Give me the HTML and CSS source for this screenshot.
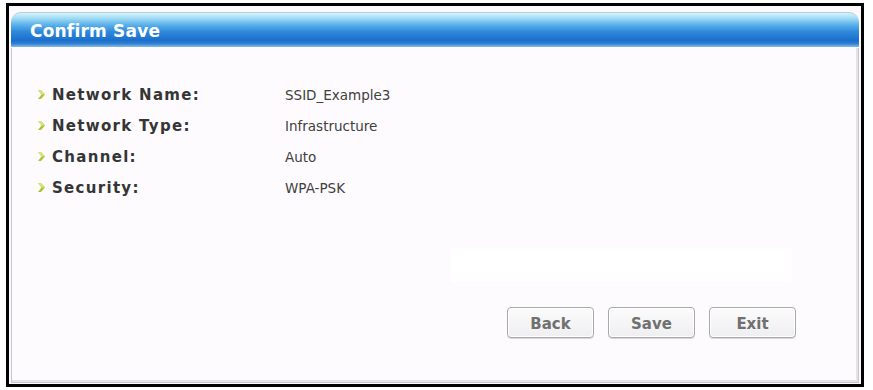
FILE: index.html
```html
<!DOCTYPE html>
<html>
<head>
<meta charset="utf-8">
<link rel="stylesheet" href="styles.css">
</head>
<body>
<div class="frame">
  <div class="panel">
    <div class="header"><span class="title">Confirm Save</span></div>
    <div class="content">
      <div class="rows">
        <div class="row">
          <span class="label"><svg class="arrow" viewBox="0 0 9 11" width="9" height="11"><path d="M1 1 L4 1 L8 5.5 L4 10 L1 10 L4.5 5.5 Z" fill="#a6c736"/><path d="M1 1 L4 1 L8 5.5 L4.5 5.5 Z" fill="#d3e67a"/></svg>Network Name:</span>
          <span class="value">SSID_Example3</span>
        </div>
        <div class="row">
          <span class="label"><svg class="arrow" viewBox="0 0 9 11" width="9" height="11"><path d="M1 1 L4 1 L8 5.5 L4 10 L1 10 L4.5 5.5 Z" fill="#a6c736"/><path d="M1 1 L4 1 L8 5.5 L4.5 5.5 Z" fill="#d3e67a"/></svg>Network Type:</span>
          <span class="value">Infrastructure</span>
        </div>
        <div class="row">
          <span class="label"><svg class="arrow" viewBox="0 0 9 11" width="9" height="11"><path d="M1 1 L4 1 L8 5.5 L4 10 L1 10 L4.5 5.5 Z" fill="#a6c736"/><path d="M1 1 L4 1 L8 5.5 L4.5 5.5 Z" fill="#d3e67a"/></svg>Channel:</span>
          <span class="value">Auto</span>
        </div>
        <div class="row">
          <span class="label"><svg class="arrow" viewBox="0 0 9 11" width="9" height="11"><path d="M1 1 L4 1 L8 5.5 L4 10 L1 10 L4.5 5.5 Z" fill="#a6c736"/><path d="M1 1 L4 1 L8 5.5 L4.5 5.5 Z" fill="#d3e67a"/></svg>Security:</span>
          <span class="value">WPA-PSK</span>
        </div>
      </div>
      <div class="whitebox"></div>
      <div class="buttons">
        <button class="btn">Back</button>
        <button class="btn">Save</button>
        <button class="btn">Exit</button>
      </div>
    </div>
  </div>
</div>
</body>
</html>
```

FILE: styles.css
```css
html, body {
  margin: 0;
  padding: 0;
  background: #ffffff;
}
body {
  padding: 3px 0 0 6px;
  font-family: "DejaVu Sans", sans-serif;
}
.frame {
  width: 852px;
  height: 378px;
  border: 3px solid #000;
  background: #fbf9fb;
  display: flex;
  flex-direction: column;
}
.panel {
  margin: 7px 2px 1px 2px;
  flex: 1;
  border: 1px solid #c9c7cb;
  border-top: none;
  border-radius: 10px 10px 0 0;
  box-shadow: inset -2px -2px 0 #e4e2e6;
  background: #fdfbfd;
  display: flex;
  flex-direction: column;
}
.header {
  height: 34px;
  border-radius: 10px 10px 0 0;
  border-top: 1px solid #b9cdd8;
  background: linear-gradient(to bottom,
    #d6f3fc 0%,
    #a2dcf5 15%,
    #5cb2ea 34%,
    #2f89db 55%,
    #1a6fcc 80%,
    #2f7fd2 90%,
    #86bdea 100%);
  margin: -1px -1px 0 -1px;
  display: flex;
  align-items: center;
  padding-left: 19px;
  border-bottom: 1px solid #ffffff;
}
.title {
  color: #ffffff;
  font-weight: bold;
  font-size: 17px;
  margin-top: 2px;
  letter-spacing: 0.2px;
}
.content {
  flex: 1;
  display: flex;
  flex-direction: column;
  padding: 0 0 0 25px;
}
.rows {
  padding-top: 38px;
  display: flex;
  flex-direction: column;
  gap: 14px;
}
.row {
  display: flex;
  align-items: center;
  height: 17px;
}
.label {
  width: 248px;
  display: flex;
  align-items: center;
  font-weight: bold;
  font-size: 15px;
  letter-spacing: 1.3px;
  color: #353535;
}
.arrow {
  margin-right: 6px;
}
.value {
  font-size: 13.5px;
  color: #404040;
}
.whitebox {
  margin: 52px 0 0 414px;
  width: 340px;
  height: 34px;
  background: #ffffff;
}
.buttons {
  display: flex;
  gap: 14px;
  margin: 25px 0 0 470px;
}
.btn {
  width: 87px;
  height: 31px;
  border: 1px solid #a9a9ad;
  border-radius: 4px;
  background: linear-gradient(to bottom, #fbfbfb, #efeff1);
  box-shadow: inset 0 0 0 1px #ffffff, 0 1px 0 #d9d9dd;
  color: #707070;
  font-family: "DejaVu Sans", sans-serif;
  font-weight: bold;
  font-size: 15px;
  padding: 0;
  padding-top: 2px;
}
```
